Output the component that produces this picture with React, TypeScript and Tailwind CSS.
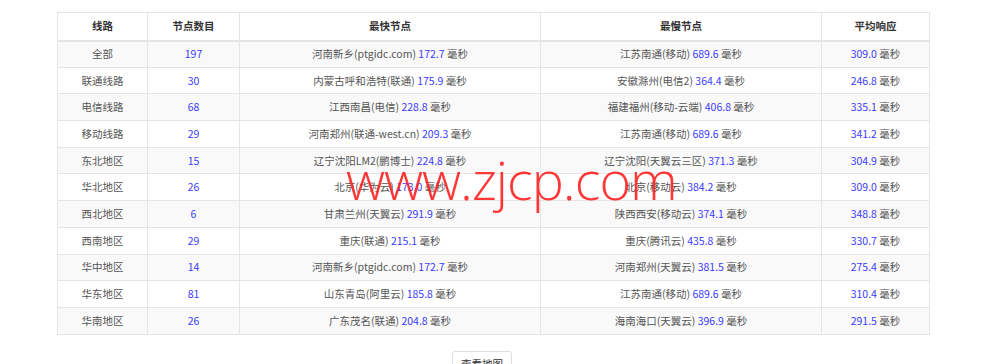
const rows: [string, string, string, string, string, string, string][] = [
  ["全部", "197", "河南新乡(ptgidc.com)", "172.7", "江苏南通(移动)", "689.6", "309.0"],
  ["联通线路", "30", "内蒙古呼和浩特(联通)", "175.9", "安徽滁州(电信2)", "364.4", "246.8"],
  ["电信线路", "68", "江西南昌(电信)", "228.8", "福建福州(移动-云端)", "406.8", "335.1"],
  ["移动线路", "29", "河南郑州(联通-west.cn)", "209.3", "江苏南通(移动)", "689.6", "341.2"],
  ["东北地区", "15", "辽宁沈阳LM2(鹏博士)", "224.8", "辽宁沈阳(天翼云三区)", "371.3", "304.9"],
  ["华北地区", "26", "北京(华为云)", "173.0", "北京(移动云)", "384.2", "309.0"],
  ["西北地区", "6", "甘肃兰州(天翼云)", "291.9", "陕西西安(移动云)", "374.1", "348.8"],
  ["西南地区", "29", "重庆(联通)", "215.1", "重庆(腾讯云)", "435.8", "330.7"],
  ["华中地区", "14", "河南新乡(ptgidc.com)", "172.7", "河南郑州(天翼云)", "381.5", "275.4"],
  ["华东地区", "81", "山东青岛(阿里云)", "185.8", "江苏南通(移动)", "689.6", "310.4"],
  ["华南地区", "26", "广东茂名(联通)", "204.8", "海南海口(天翼云)", "396.9", "291.5"],
];

function Ms({ value }: { value: string }) {
  return (
    <>
      <span className="text-[#3b3bff]">{value}</span> 毫秒
    </>
  );
}

export default function App() {
  return (
    <div
      className="relative h-[364px] w-[1000px] overflow-hidden bg-white text-[10.5px] text-[#555]"
      style={{ fontFamily: '"Noto Sans CJK SC", "Noto Sans", sans-serif' }}
    >
      <div className="ml-[57px] pt-[12px]">
        <table className="w-[872px] table-fixed border-collapse border border-[#e5e5e5] text-center">
          <colgroup>
            <col className="w-[90px]" />
            <col className="w-[92px]" />
            <col className="w-[301px]" />
            <col className="w-[281px]" />
            <col className="w-[108px]" />
          </colgroup>
          <thead>
            <tr className="h-[28px] border-b-2 border-[#e5e5e5] font-bold text-[#333]">
              <th className="border border-[#e5e5e5]">线路</th>
              <th className="border border-[#e5e5e5]">节点数目</th>
              <th className="border border-[#e5e5e5]">最快节点</th>
              <th className="border border-[#e5e5e5]">最慢节点</th>
              <th className="border border-[#e5e5e5]">平均响应</th>
            </tr>
          </thead>
          <tbody>
            {rows.map((r, i) => (
              <tr key={r[0]} className={`h-[26.7px] ${i % 2 === 0 ? "bg-[#f9f9f9]" : "bg-white"}`}>
                <td className="border border-[#e5e5e5]">{r[0]}</td>
                <td className="border border-[#e5e5e5] text-[#3b3bff]">{r[1]}</td>
                <td className="border border-[#e5e5e5]">
                  {r[2]} <Ms value={r[3]} />
                </td>
                <td className="border border-[#e5e5e5]">
                  {r[4]} <Ms value={r[5]} />
                </td>
                <td className="border border-[#e5e5e5]">
                  <Ms value={r[6]} />
                </td>
              </tr>
            ))}
          </tbody>
        </table>
      </div>

      <div className="pl-[452px] pt-[16px]">
        <button className="h-[26px] w-[60px] rounded-[3px] border border-[#ddd] bg-white text-[10.5px] text-[#333]">
          查看地图
        </button>
      </div>

      {/* watermark */}
      <div
        className="pointer-events-none absolute left-[346px] top-[152px] text-[54px] font-light leading-none tracking-[-1px] text-[#ff2222] opacity-90"
        style={{ fontFamily: '"Open Sans", sans-serif' }}
      >
        www.zjcp.com
      </div>
    </div>
  );
}
